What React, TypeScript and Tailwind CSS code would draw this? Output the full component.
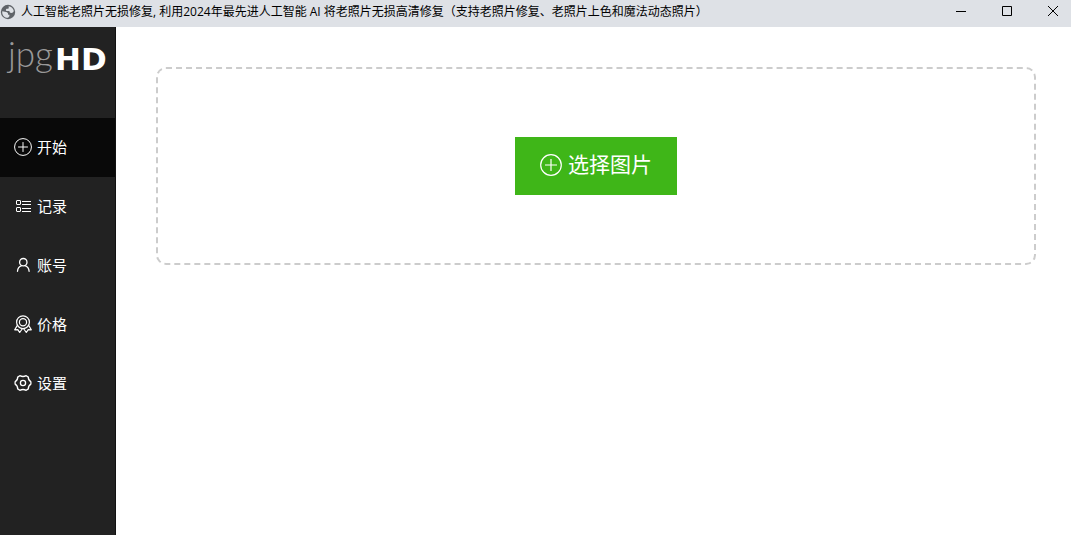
import type { ReactNode } from "react";

function PlusCircleIcon({ className }: { className: string }) {
  return (
    <svg viewBox="0 0 22 22" fill="none" stroke="currentColor" className={className} aria-hidden="true">
      <circle cx="11" cy="11" r="10.3" strokeWidth="1.2" />
      <path d="M11 5v12M5 11h12" strokeWidth="1.2" />
    </svg>
  );
}

const iconClass = "size-[18px] shrink-0";

function ListIcon() {
  return (
    <svg viewBox="0 0 18 18" fill="none" stroke="currentColor" className={iconClass} aria-hidden="true">
      <rect x="2.5" y="3.5" width="4" height="4" rx="0.5" />
      <rect x="2.5" y="10.5" width="4" height="4" rx="0.5" />
      <path d="M8 4.500h9M8 7.500h9M8 11.500h9M8 14.500h9" />
    </svg>
  );
}

function UserIcon() {
  return (
    <svg viewBox="0 0 18 18" fill="none" stroke="currentColor" strokeWidth="1.3" strokeLinecap="round" className={iconClass} aria-hidden="true">
      <circle cx="9.3" cy="6.2" r="3.7" />
      <path d="M3.5 15.3c.2-3 1.700-4.800 4.100-5.600M11 9.700c2.400.8 3.900 2.600 4.100 5.600" />
    </svg>
  );
}

function MedalIcon() {
  return (
    <svg viewBox="0 0 18 18" fill="none" stroke="currentColor" strokeWidth="1.2" strokeLinejoin="round" className={iconClass} aria-hidden="true">
      <circle cx="9" cy="7.200" r="6.400" />
      <circle cx="9" cy="7.200" r="3.600" />
      <path d="M3.200 10.600.7 14.800l3.100-.2 1.900 2.900 2.800-4M14.800 10.600l2.500 4.200-3.100-.2-1.900 2.900-2.800-4" />
    </svg>
  );
}

function GearIcon() {
  return (
    <svg viewBox="0 0 18 18" fill="none" stroke="currentColor" strokeWidth="1.300" strokeLinejoin="round" className={iconClass} aria-hidden="true">
      <path d="M5.800 1.700Q9 3.300 12.200 1.700L14.300 3.100Q14.200 6.300 16.900 7.900V10.100Q14.200 11.700 14.300 14.900L12.200 16.300Q9 14.700 5.800 16.300L3.700 14.900Q3.800 11.700 1.100 10.100V7.900Q3.800 6.300 3.700 3.100Z" />
      <circle cx="9" cy="9" r="2.600" />
    </svg>
  );
}

function GlobeIcon() {
  return (
    <svg viewBox="0 0 16 16" className="size-4 shrink-0" aria-hidden="true">
      <circle cx="8" cy="8" r="7.200" fill="#5f6368" />
      <path
        d="M2.300 7.300 6.200 8c1.100.2 1.900.9 1.900 1.900v.8h1.300v1.600l-1.300 1.500C4.800 14 2.200 11.500 2.200 8.200ZM8.600 2.200c2.700.2 4.800 2.200 5.200 4.900-.4 1.300-1.300 2-2.500 2-1.300 0-1.900-.8-1.900-2H7.100c-.7 0-1.200-.5-1.200-1.200s.6-1.200 1.300-1.200h.7c.6 0 .9-.4.9-1Z"
        fill="#dee1e6"
      />
    </svg>
  );
}

const navItems: { label: string; icon: ReactNode }[] = [
  { label: "开始", icon: <PlusCircleIcon className={iconClass} /> },
  { label: "记录", icon: <ListIcon /> },
  { label: "账号", icon: <UserIcon /> },
  { label: "价格", icon: <MedalIcon /> },
  { label: "设置", icon: <GearIcon /> },
];

const windowButtons = [
  { label: "最小化", path: "M0 5.500h10" },
  { label: "最大化", path: "M.5.500h9v9h-9z" },
  { label: "关闭", path: "M0 0l10 10M10 0L0 10" },
];

function TitleBar() {
  return (
    <header className="flex h-[27px] shrink-0 items-start bg-[#dee1e6] text-black">
      <div className="flex h-6 min-w-0 flex-1 items-center gap-[5px]">
        <GlobeIcon />
        <h1 className="truncate text-xs">
          人工智能老照片无损修复, 利用2024年最先进人工智能 AI 将老照片无损高清修复（支持老照片修复、老照片上色和魔法动态照片）
        </h1>
      </div>
      <div className="flex gap-2.5">
        {windowButtons.map((button) => (
          <button key={button.label} type="button" aria-label={button.label} className="flex h-[22px] w-9 items-center justify-center">
            <svg viewBox="0 0 10 10" fill="none" stroke="currentColor" className="size-2.5 overflow-visible" aria-hidden="true">
              <path d={button.path} />
            </svg>
          </button>
        ))}
      </div>
    </header>
  );
}

function Sidebar() {
  return (
    <aside className="w-[116px] shrink-0 border-r border-[#111] bg-[#222] text-white">
      <a href="#" className="flex h-[91px] items-start pt-1.5 pl-2 leading-10">
        <span className="font-['Lato',sans-serif] text-[35px] font-light text-[#999]">jpg</span>
        <span className="pt-1.5 pl-0.5 font-['DejaVu_Sans',sans-serif] text-[31px] font-bold">HD</span>
      </a>
      <nav>
        {navItems.map((item, index) => (
          <a
            key={item.label}
            href="#"
            aria-current={index === 0 ? "page" : undefined}
            className="flex h-[59px] items-center gap-[5px] pb-px pl-3.5 text-[15px] aria-[current=page]:bg-[#090909]"
          >
            {item.icon}
            <span>{item.label}</span>
          </a>
        ))}
      </nav>
    </aside>
  );
}

export default function App() {
  return (
    <div className="flex min-h-screen flex-col bg-white font-['Open_Sans','Noto_Sans_CJK_SC',sans-serif]">
      <TitleBar />
      <div className="flex flex-1">
        <Sidebar />
        <main className="min-w-0 flex-1 pt-10 pr-[35px] pl-10">
          <div className="flex justify-center rounded-[10px] border-2 border-dashed border-[#ccc] py-[68px]">
            <button type="button" className="flex h-[58px] items-center gap-1.5 bg-[#3fb618] px-[25px] pb-0.5 text-[21px] text-white">
              <PlusCircleIcon className="size-[22px]" />
              <span>选择图片</span>
            </button>
          </div>
        </main>
      </div>
    </div>
  );
}
